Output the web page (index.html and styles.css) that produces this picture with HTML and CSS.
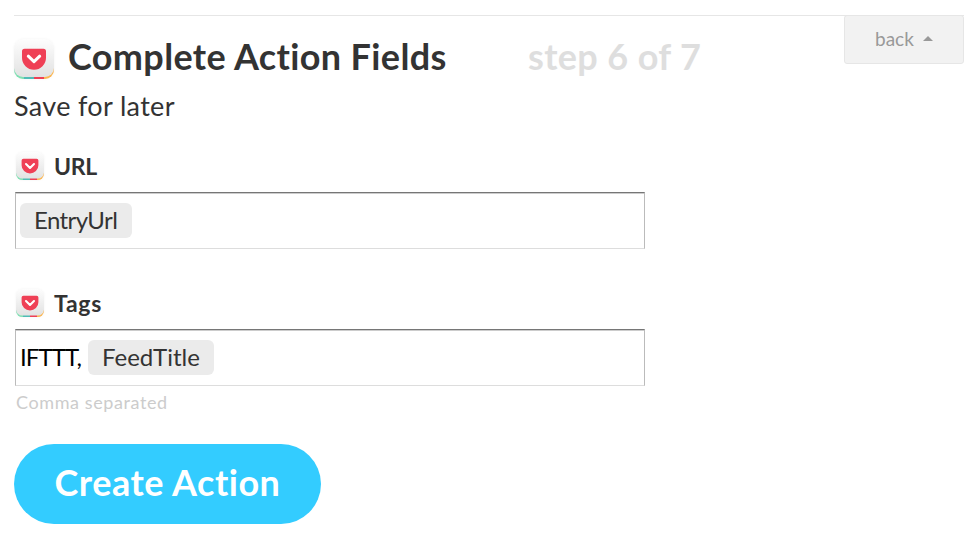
FILE: index.html
```
<!DOCTYPE html>
<html lang="en">
<head>
    <meta charset="UTF-8">
    <meta name="viewport" content="width=device-width, initial-scale=1.0">
    <title>Complete Action Fields</title>
    <link rel="stylesheet" href="styles.css">
</head>
<body>
    <!-- Pocket icon, shared by the heading and the field labels -->
    <svg class="sprite" width="0" height="0">
        <defs>
            <linearGradient id="tile" x1="0" y1="0" x2="0" y2="1">
                <stop offset="0" stop-color="#fdfdfd"/>
                <stop offset="1" stop-color="#e2e2e2"/>
            </linearGradient>
            <clipPath id="tile-clip">
                <rect width="40" height="40" rx="9"/>
            </clipPath>
        </defs>
        <symbol id="pocket" viewBox="0 0 40 40">
            <g clip-path="url(#tile-clip)">
                <rect y="20" width="10" height="20" fill="#7ee0b2"/>
                <rect x="10" y="20" width="10" height="20" fill="#50bcb6"/>
                <rect x="20" y="20" width="10" height="20" fill="#ee4056"/>
                <rect x="30" y="20" width="10" height="20" fill="#fcb650"/>
                <rect width="40" height="38" rx="9" fill="url(#tile)"/>
            </g>
            <path d="M10.5 9.7h19a2.5 2.5 0 0 1 2.5 2.5v6.6a12 12 0 0 1-24 0v-6.6a2.5 2.5 0 0 1 2.5-2.5z" fill="#ef4056"/>
            <path d="M14.3 17.2l5.7 5.5 5.7-5.5" fill="none" stroke="#fff" stroke-width="3" stroke-linecap="round" stroke-linejoin="round"/>
        </symbol>
    </svg>

    <div class="step">
        <div class="step-header">
            <svg class="icon-large"><use href="#pocket"/></svg>
            <h1>Complete Action Fields</h1>
            <span class="step-count">step 6 of 7</span>
            <a class="back">back <span class="arrow"></span></a>
        </div>
        <p class="subtitle">Save for later</p>

        <div class="field">
            <div class="label"><svg class="icon-small"><use href="#pocket"/></svg><span class="label-url">URL</span></div>
            <div class="input"><span class="token token-url">EntryUrl</span></div>
        </div>

        <div class="field">
            <div class="label"><svg class="icon-small"><use href="#pocket"/></svg><span class="label-tags">Tags</span></div>
            <div class="input"><span class="typed">IFTTT,</span><span class="token token-title">FeedTitle</span></div>
            <div class="help">Comma separated</div>
        </div>

        <button class="create">Create Action</button>
    </div>
</body>
</html>
```
FILE: styles.css
```
* {
    box-sizing: border-box;
    margin: 0;
    padding: 0;
}

body {
    font-family: Lato, "Liberation Sans", sans-serif;
    font-variant-ligatures: none;
    background: #fff;
    color: #333;
}

.sprite {
    position: absolute;
}

.step {
    width: 950px;
    margin: 15px 0 0 14px;
    border-top: 1px solid #e6e6e6;
}

.step-header {
    display: flex;
    align-items: flex-start;
    height: 70px;
}

.icon-large {
    width: 40px;
    height: 40px;
    margin-top: 23px;
    flex: none;
    filter: drop-shadow(0 0 1px rgba(0, 0, 0, 0.05));
}

h1,
.step-count {
    font-size: 36px;
    font-weight: 700;
    line-height: 40px;
    letter-spacing: 0.36px;
    margin-top: 20px;
    white-space: nowrap;
}

h1 {
    width: 460px;
    margin-left: 14px;
}

.step-count {
    color: #dedede;
}

.back {
    display: flex;
    align-items: center;
    width: 120px;
    height: 49px;
    margin-top: -1px;
    margin-left: auto;
    padding: 0 0 3px 30px;
    background: #f2f2f2;
    border: 1px solid #e6e6e6;
    border-radius: 3px;
    color: #999;
    font-size: 19px;
}

.arrow {
    margin-left: 9px;
    border: 5px solid transparent;
    border-top: 0;
    border-bottom-color: #999;
}

.subtitle {
    height: 40px;
    font-size: 27px;
    line-height: 40px;
    letter-spacing: 0.34px;
}

.field {
    height: 137px;
    padding: 26px 0 0 1px;
}

.label {
    display: flex;
    align-items: center;
    height: 28px;
    font-size: 23px;
    font-weight: 700;
    margin-bottom: 12px;
}

.label-url {
    letter-spacing: -0.3px;
}

.label-tags {
    letter-spacing: 0.7px;
}

.icon-small {
    width: 28px;
    height: 28px;
    margin: 0 10px 0 1px;
    filter: drop-shadow(0 0 1px rgba(0, 0, 0, 0.05));
}

.input {
    display: flex;
    align-items: center;
    width: 630px;
    height: 57px;
    padding: 0 4px;
    border: 1px solid #bbb;
    border-top-color: #767676;
    border-bottom-color: #ddd;
    box-shadow: inset 0 1px #ccc;
    color: #000;
    font-size: 24px;
}

.token {
    height: 35px;
    padding: 0 14px;
    border-radius: 6px;
    background: #ebebeb;
    color: #333;
    line-height: 33px;
}

.token-url {
    width: 112px;
    letter-spacing: -0.6px;
}

.token-title {
    width: 126px;
}

.typed {
    width: 68px;
    line-height: 33px;
    letter-spacing: -0.9px;
    padding-bottom: 2px;
}

.help {
    margin: 4px 0 0 1px;
    color: #ccc;
    font-size: 18px;
    line-height: 24px;
    letter-spacing: 0.6px;
}

.create {
    display: block;
    width: 307px;
    height: 80px;
    margin-top: 44px;
    padding-bottom: 4px;
    border: 0;
    border-radius: 40px;
    background: #3cf;
    color: #fff;
    font-family: inherit;
    font-size: 36px;
    font-weight: 700;
    letter-spacing: 0.5px;
    white-space: nowrap;
}
```
